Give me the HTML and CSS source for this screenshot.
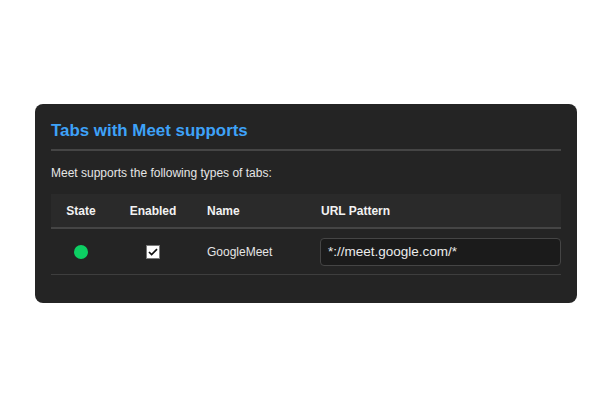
FILE: index.html
```html
<!DOCTYPE html>
<html lang="en">
<head>
<meta charset="utf-8">
<title>Tabs with Meet supports</title>
<link rel="stylesheet" href="styles.css">
</head>
<body>
<main class="page">
  <section class="card">
    <h2 class="card-title">Tabs with Meet supports</h2>
    <p class="card-desc">Meet supports the following types of tabs:</p>
    <table class="tabs-table">
      <thead>
        <tr class="head-row">
          <th class="col-state">State</th>
          <th class="col-enabled">Enabled</th>
          <th class="col-name">Name</th>
          <th class="col-url">URL Pattern</th>
        </tr>
      </thead>
      <tbody>
        <tr class="body-row">
          <td class="col-state"><span class="state-dot"></span></td>
          <td class="col-enabled">
            <span class="check">
              <svg viewBox="0 0 14 14" width="14" height="14" aria-hidden="true">
                <rect x="0.5" y="0.5" width="13" height="13" fill="#ffffff" stroke="#7a7a7a"/>
                <path d="M3 7 L5.6 9.6 L11 4.2" fill="none" stroke="#111" stroke-width="1.7"/>
              </svg>
            </span>
          </td>
          <td class="col-name">GoogleMeet</td>
          <td class="col-url"><div class="url-input">*://meet.google.com/*</div></td>
        </tr>
      </tbody>
    </table>
  </section>
</main>
</body>
</html>
```

FILE: styles.css
```css
html, body {
  margin: 0;
  padding: 0;
  background: #ffffff;
}

body {
  font-family: "Liberation Sans", Arial, sans-serif;
}

.page {
  min-height: 408px;
  display: flex;
  align-items: flex-start;
  justify-content: center;
  padding-top: 104px;
  box-sizing: border-box;
}

.card {
  width: 542px;
  box-sizing: border-box;
  background: #242424;
  border-radius: 8px;
  padding: 17px 16px 28px;
}

.card-title {
  margin: 0;
  font-size: 16.9px;
  line-height: 20px;
  font-weight: bold;
  color: #3ea2f8;
  padding-bottom: 8px;
  border-bottom: 2px solid #454545;
}

.card-desc {
  margin: 15px 0 14px;
  font-size: 12px;
  line-height: 14px;
  color: #e6e6e6;
}

.tabs-table {
  width: 100%;
  table-layout: fixed;
  border-collapse: collapse;
  font-size: 12px;
  color: #e6e6e6;
}

.head-row {
  background: #2a2a2a;
  border-bottom: 2px solid #454545;
}

.head-row th {
  height: 33px;
  padding: 0;
  font-weight: bold;
  color: #f2f2f2;
  vertical-align: middle;
}

.body-row {
  border-bottom: 1px solid #3e3e3e;
}

.body-row td {
  height: 45px;
  padding: 0;
  vertical-align: middle;
}

.col-state {
  width: 60px;
  text-align: center;
}

.col-enabled {
  width: 84px;
  text-align: center;
}

.col-name {
  width: 125px;
  text-align: left;
  padding-left: 12px !important;
  box-sizing: border-box;
}

.col-url {
  text-align: left;
}

.head-row .col-url {
  padding-left: 1px;
}

.state-dot {
  display: inline-block;
  width: 14px;
  height: 14px;
  border-radius: 50%;
  background: #0dcf63;
  vertical-align: middle;
}

.check {
  display: inline-block;
  width: 14px;
  height: 14px;
  vertical-align: middle;
}

.check svg {
  display: block;
}

.url-input {
  height: 28px;
  box-sizing: border-box;
  border: 1px solid #454545;
  border-radius: 4px;
  background: #1b1b1b;
  padding: 0 8px 0 7px;
  font-size: 13.5px;
  line-height: 26px;
  color: #ececec;
}
```
